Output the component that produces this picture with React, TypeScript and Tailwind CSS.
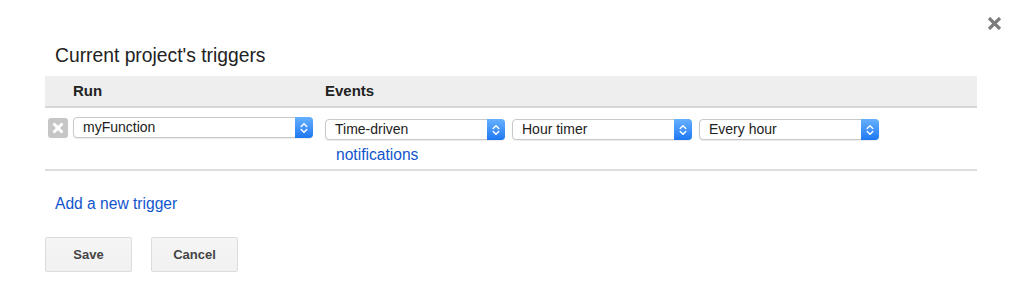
import React from "react";

function Chevrons() {
  return (
    <svg width="8" height="12" viewBox="0 0 8 12" fill="none">
      <path d="M1.2 4.6 L4 1.8 L6.8 4.6" stroke="white" strokeWidth="1.4" strokeLinecap="round" strokeLinejoin="round" />
      <path d="M1.2 7.4 L4 10.2 L6.8 7.4" stroke="white" strokeWidth="1.4" strokeLinecap="round" strokeLinejoin="round" />
    </svg>
  );
}

function Select({ label, className }: { label: string; className: string }) {
  return (
    <div
      className={
        "flex items-stretch rounded-[4px] border border-[#c9c9c9] bg-white shadow-[0_1px_1px_rgba(0,0,0,0.08)] " +
        className
      }
    >
      <div className="flex flex-1 items-center pl-[9px] text-[14px] text-[#222]">{label}</div>
      <div className="-my-px -mr-px flex w-[18px] items-center justify-center rounded-r-[4px] bg-linear-to-b from-[#66b0ff] to-[#1b78f2]">
        <Chevrons />
      </div>
    </div>
  );
}

export default function App() {
  return (
    <div
      className="relative h-[298px] w-[1024px] overflow-hidden bg-white pl-[45px] text-[#222]"
      style={{ fontFamily: '"Liberation Sans", Arial, sans-serif' }}
    >
      <button className="absolute right-[22px] top-[17px]" aria-label="Close">
        <svg width="15" height="13" viewBox="0 0 15 13">
          <path d="M2 1 L13 12 M13 1 L2 12" stroke="#7c7c7c" strokeWidth="3.2" />
        </svg>
      </button>

      <h2 className="pt-[45px] pl-[10px] text-[19.3px] leading-[22px] font-normal">Current project's triggers</h2>

      <div className="mt-[9px] mr-[47px]">
        <div className="flex h-[32px] items-center border-b-2 border-[#d6d6d6] bg-[#eeeeee] text-[15px] font-bold">
          <div className="w-[280px] pl-[28px]">Run</div>
          <div>Events</div>
        </div>

        <div className="flex h-[63px] items-start border-b-2 border-[#dedede] pt-[9px]">
          <div className="flex w-[280px] items-center">
            <div className="ml-[3px] mr-[5px] flex h-[20px] w-[20px] items-center justify-center rounded-[3px] bg-[#c6c6c6]">
              <svg width="12" height="12" viewBox="0 0 12 12">
                <path d="M1.5 1.5 L10.5 10.5 M10.5 1.5 L1.5 10.5" stroke="white" strokeWidth="3" />
              </svg>
            </div>
            <Select label="myFunction" className="h-[21px] w-[240px]" />
          </div>

          <div className="flex flex-col pt-[2px]">
            <div className="flex gap-[7px]">
              <Select label="Time-driven" className="h-[21px] w-[180px]" />
              <Select label="Hour timer" className="h-[21px] w-[180px]" />
              <Select label="Every hour" className="h-[21px] w-[180px]" />
            </div>
            <a href="#" className="mt-[6px] ml-[11px] text-[15.6px] leading-[18px] text-[#1155cc]">
              notifications
            </a>
          </div>
        </div>
      </div>

      <a href="#" className="mt-[24px] ml-[10px] block text-[15.6px] leading-[18px] text-[#1155cc]">
        Add a new trigger
      </a>

      <div className="mt-[24px] flex gap-[19px]">
        <button className="h-[35px] w-[87px] rounded-[2px] border border-[#dcdcdc] bg-linear-to-b from-[#f5f5f5] to-[#f1f1f1] text-[13px] font-bold text-[#444]">
          Save
        </button>
        <button className="h-[35px] w-[87px] rounded-[2px] border border-[#dcdcdc] bg-linear-to-b from-[#f5f5f5] to-[#f1f1f1] text-[13px] font-bold text-[#444]">
          Cancel
        </button>
      </div>
    </div>
  );
}
